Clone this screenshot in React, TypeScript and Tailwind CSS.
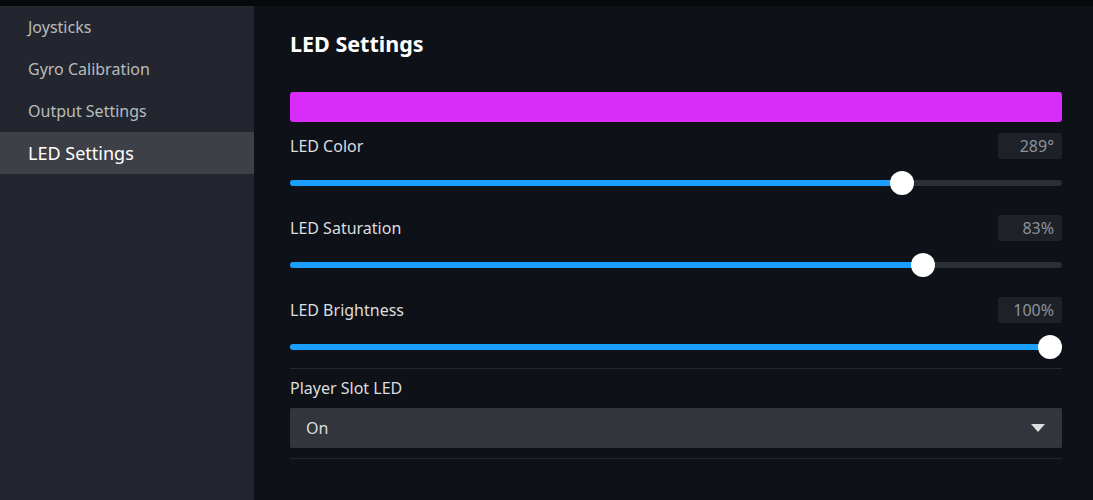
import React from 'react'

const navItems = ['Joysticks', 'Gyro Calibration', 'Output Settings', 'LED Settings']

interface SliderRowProps {
  label: string
  value: string
  ratio: number
}

function SliderRow({ label, value, ratio }: SliderRowProps) {
  // thumb travels inside the track, 24px thumb
  const fill = `calc(12px + (100% - 24px) * ${ratio})`
  return (
    <div className="flex flex-col">
      <div className="flex items-center justify-between h-[26px]">
        <span className="text-[16px] text-[#dcdedf]">{label}</span>
        <span className="w-[64px] h-[26px] rounded-[2px] bg-[#1e2128] text-right pr-[8px] text-[16px] leading-[26px] text-[#8b929a]">
          {value}
        </span>
      </div>
      <div className="relative h-[48px] flex items-center">
        <div className="w-full h-[6px] rounded-full bg-[#2a2e35]" />
        <div className="absolute left-0 h-[6px] rounded-full bg-[#1a9fff]" style={{ width: fill }} />
        <div
          className="absolute w-[24px] h-[24px] -ml-[12px] rounded-full bg-white"
          style={{ left: fill }}
        />
      </div>
    </div>
  )
}

export default function App() {
  return (
    <div className="w-[1093px] h-[500px] flex flex-col bg-[#0e1118] font-['Noto_Sans',sans-serif] overflow-hidden">
      <div className="h-[6px] bg-[#07080b] shrink-0" />
      <div className="flex flex-1 min-h-0">
        {/* Sidebar */}
        <div className="w-[254px] shrink-0 bg-[#23262e] flex flex-col">
          {navItems.map((item) => {
            const active = item === 'LED Settings'
            return (
              <div
                key={item}
                className={`h-[42px] flex items-center pl-[28px] ${
                  active ? 'bg-[#3d4047] text-white text-[18px]' : 'text-[#b8bcbf] text-[16px]'
                }`}
              >
                {item}
              </div>
            )
          })}
        </div>

        {/* Content */}
        <div className="flex-1 pl-[36px] pr-[31px] pt-[23px]">
          <h1 className="text-[21.5px] font-bold text-white leading-[30px]">LED Settings</h1>
          <div className="mt-[33px] h-[30px] rounded-[3px] bg-[#d92cfa]" />
          <div className="mt-[11px] flex flex-col">
            <SliderRow label="LED Color" value="289°" ratio={289 / 360} />
            <div className="mt-[8px]">
              <SliderRow label="LED Saturation" value="83%" ratio={0.83} />
            </div>
            <div className="mt-[8px]">
              <SliderRow label="LED Brightness" value="100%" ratio={1} />
            </div>
          </div>
          <div className="mt-[-3px] border-t border-[#23262e]" />
          <div className="pt-[7px] text-[16px] text-[#dcdedf] leading-[24px]">Player Slot LED</div>
          <div className="mt-[8px] h-[40px] rounded-[2px] bg-[#32353c] flex items-center justify-between pl-[16px] pr-[17px]">
            <span className="text-[16px] text-[#dcdedf]">On</span>
            <svg width="14" height="8" viewBox="0 0 14 8">
              <path d="M0 0 L14 0 L7 8 Z" fill="#dcdedf" />
            </svg>
          </div>
          <div className="mt-[10px] border-t border-[#23262e]" />
        </div>
      </div>
    </div>
  )
}
